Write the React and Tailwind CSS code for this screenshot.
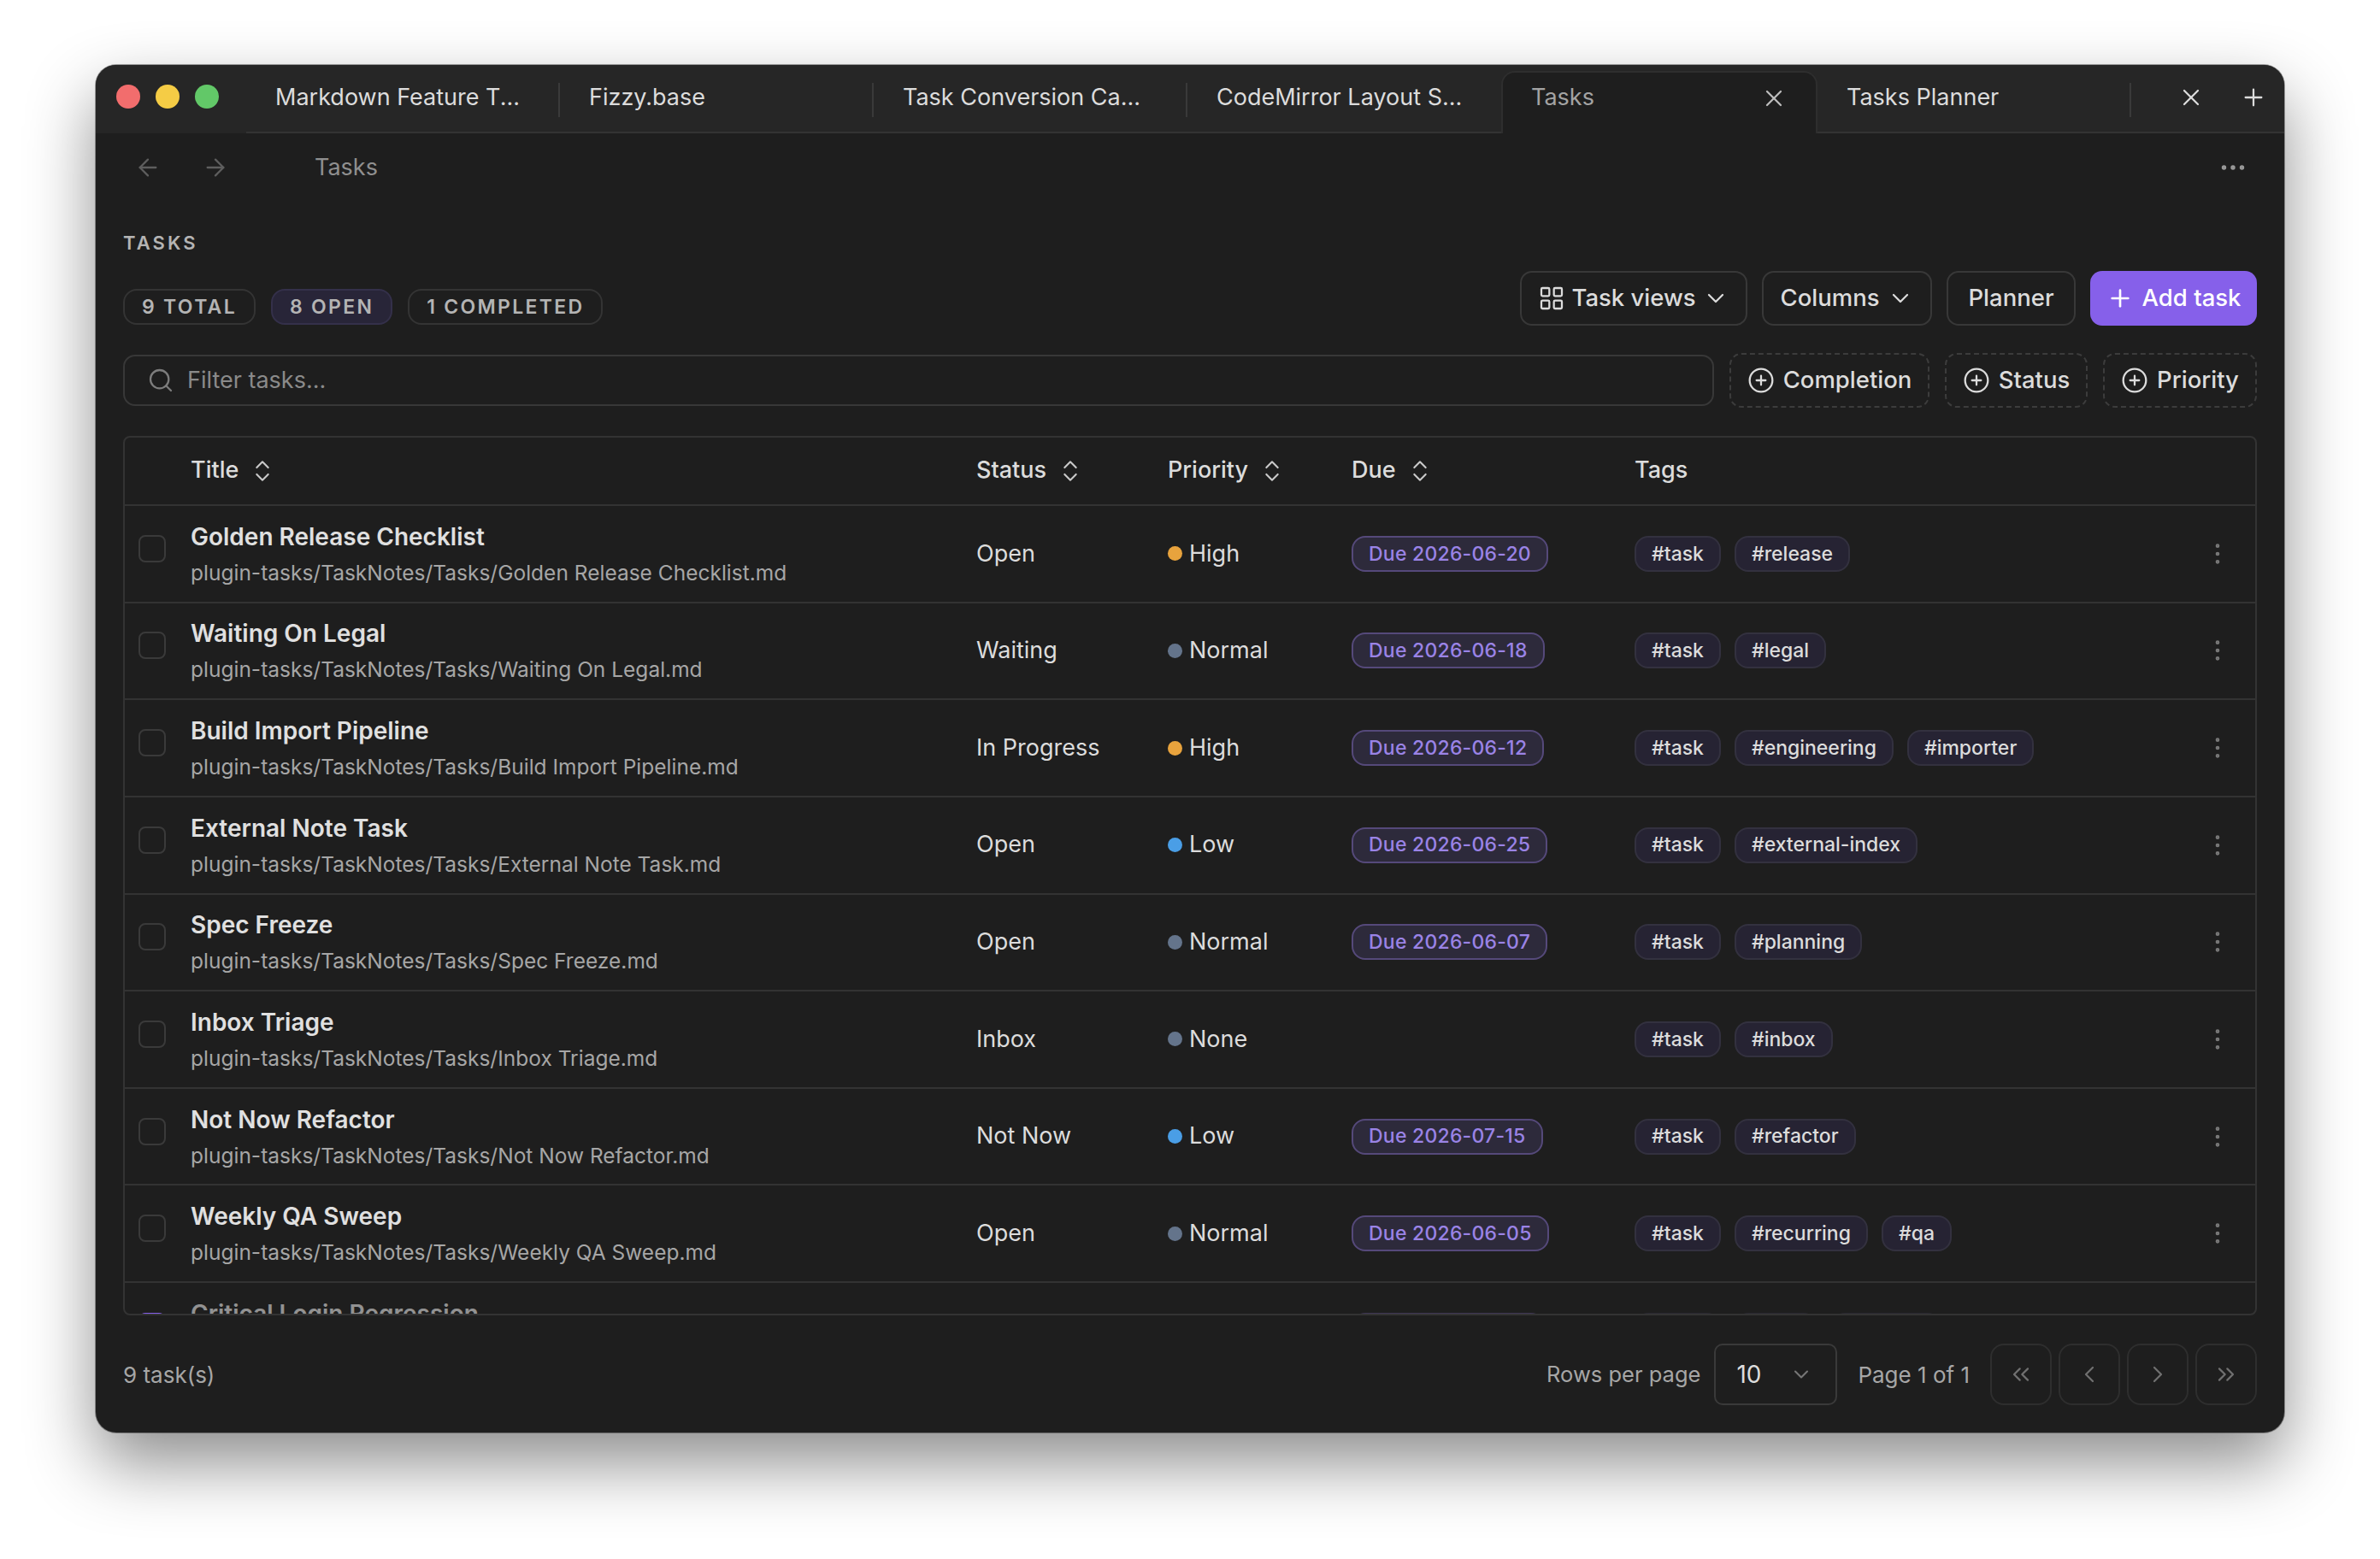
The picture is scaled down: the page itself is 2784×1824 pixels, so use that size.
import React from "react";
import {
  ArrowLeft,
  ArrowRight,
  Check,
  ChevronDown,
  ChevronLeft,
  ChevronRight,
  ChevronsLeft,
  ChevronsRight,
  ChevronsUpDown,
  CirclePlus,
  Ellipsis,
  EllipsisVertical,
  LayoutGrid,
  Plus,
  Search,
  X,
} from "lucide-react";

const tabs = [
  { title: "Markdown Feature T...", width: "w-[367px]", divider: true },
  { title: "Fizzy.base", width: "w-[367px]", divider: true },
  { title: "Task Conversion Ca...", width: "w-[367px]", divider: true },
  { title: "CodeMirror Layout S...", width: "w-[367px]", divider: false },
];

const dotColors = {
  High: "bg-[#e8a33d]",
  Normal: "bg-[#64748b]",
  None: "bg-[#64748b]",
  Low: "bg-[#4a9ee6]",
};

const rows = [
  { title: "Golden Release Checklist", status: "Open", priority: "High", due: "2026-06-20", tags: ["#task", "#release"] },
  { title: "Waiting On Legal", status: "Waiting", priority: "Normal", due: "2026-06-18", tags: ["#task", "#legal"] },
  { title: "Build Import Pipeline", status: "In Progress", priority: "High", due: "2026-06-12", tags: ["#task", "#engineering", "#importer"] },
  { title: "External Note Task", status: "Open", priority: "Low", due: "2026-06-25", tags: ["#task", "#external-index"] },
  { title: "Spec Freeze", status: "Open", priority: "Normal", due: "2026-06-07", tags: ["#task", "#planning"] },
  { title: "Inbox Triage", status: "Inbox", priority: "None", due: null, tags: ["#task", "#inbox"] },
  { title: "Not Now Refactor", status: "Not Now", priority: "Low", due: "2026-07-15", tags: ["#task", "#refactor"] },
  { title: "Weekly QA Sweep", status: "Open", priority: "Normal", due: "2026-06-05", tags: ["#task", "#recurring", "#qa"] },
  { title: "Critical Login Regression", status: "Done", priority: "High", due: "2026-06-01", tags: ["#task", "#bug", "#critical"], done: true },
];

const gridCols = "grid-cols-[77px_919px_224px_215px_331px_1fr_88px]";

function Tab({ title, width, divider }) {
  return (
    <div className={`${width} relative flex h-full items-center border-b-2 border-[#333333] pl-[34px] pb-[2px]`}>
      <span className="text-[27px] text-[#dcdcdc]">{title}</span>
      {divider && <span className="absolute right-0 top-[21px] h-[40px] w-[2px] bg-[#3a3a3a]" />}
    </div>
  );
}

function SortHeader({ label }) {
  return (
    <div className="flex items-center gap-[12px] pb-[1px] text-[27px] font-medium text-[#dcdcdc]">
      {label}
      <ChevronsUpDown size={32} strokeWidth={1.6} className="text-[#c8c8c8]" />
    </div>
  );
}

function OutlineButton({ className, children }) {
  return (
    <button className={`flex h-[64px] items-center justify-center rounded-[14px] border-2 border-[#383838] text-[27.5px] font-medium text-[#dcdcdc] ${className}`}>
      {children}
    </button>
  );
}

function FacetButton({ label, className }) {
  return (
    <button className={`flex h-[64px] items-center justify-center gap-[10px] rounded-[14px] border-2 border-dashed border-[#3c3c3c] text-[27.5px] font-medium text-[#dcdcdc] ${className}`}>
      <CirclePlus size={32} strokeWidth={1.7} />
      {label}
    </button>
  );
}

function Chip({ label, active }) {
  return (
    <span
      className={`flex h-[42px] items-center rounded-[16px] border-2 px-[20px] text-[23px] font-semibold tracking-[0.1em] text-[#b4b4b4] ${
        active ? "border-[#34304a] bg-[#282538]" : "border-[#343434]"
      }`}
    >
      {label}
    </span>
  );
}

function PagerButton({ children }) {
  return (
    <button className="flex h-[72px] w-[72px] items-center justify-center rounded-[16px] border-2 border-[#2e2e2e] text-[#707070]">
      {children}
    </button>
  );
}

function Row({ row }) {
  const dim = row.done ? "opacity-60" : "";
  return (
    <div className={`grid ${gridCols} h-[113.625px] items-center border-b-2 border-[#333333]`}>
      <div className="pl-[16px]">
        {row.done ? (
          <span className="mb-[9px] flex h-[32px] w-[32px] items-center justify-center rounded-[8px] bg-[#8660ea] text-white">
            <Check size={24} />
          </span>
        ) : (
          <span className="mb-[12px] block h-[32px] w-[32px] rounded-[8px] border-2 border-[#3a3a3a]" />
        )}
      </div>
      <div className={`pt-[2px] ${dim}`}>
        <div className="text-[28px] font-semibold leading-[40px] text-[#e0e0e0]">{row.title}</div>
        <div className="mt-[2px] text-[24.5px] leading-[40px] text-[#a6a6a6]">
          plugin-tasks/TaskNotes/Tasks/{row.title}.md
        </div>
      </div>
      <div className={`text-[27px] text-[#dcdcdc] ${dim}`}>{row.status}</div>
      <div className={`flex items-center gap-[8px] text-[27px] text-[#dcdcdc] ${dim}`}>
        <span className={`h-[17px] w-[17px] shrink-0 rounded-full ${dotColors[row.priority]}`} />
        {row.priority}
      </div>
      <div className={dim}>
        {row.due && (
          <span className="inline-flex h-[42px] items-center rounded-[16px] border-2 border-[#55497a] bg-[#2d2a3b] px-[18px] text-[23px] font-medium tracking-[0.01em] text-[#9a83e6]">
            Due {row.due}
          </span>
        )}
      </div>
      <div className={`flex gap-[16px] ${dim}`}>
        {row.tags.map((tag) => (
          <span
            key={tag}
            className="flex h-[42px] items-center rounded-[16px] border-2 border-[#33313f] bg-[#262333] px-[18px] text-[23px] font-medium text-[#dcdcdc]"
          >
            {tag}
          </span>
        ))}
      </div>
      <div className={`flex justify-center text-[#7a7a7a] ${dim}`}>
        <EllipsisVertical size={32} strokeWidth={1.5} />
      </div>
    </div>
  );
}

export default function App() {
  return (
    <div className="h-[1824px] overflow-hidden bg-white px-[112px] pt-[76px] font-['Inter',sans-serif]">
      <div className="flex h-[1600px] flex-col overflow-hidden rounded-[24px] bg-[#1e1e1e] shadow-[0_0_0_1px_rgba(0,0,0,0.35),0_36px_80px_rgba(0,0,0,0.45)]">
        {/* tab bar */}
        <div className="flex h-[80px] items-stretch bg-[#262626]">
          <div className="flex w-[176px] items-center gap-[18px] pb-[6px] pl-[24px]">
            <span className="h-[28px] w-[28px] rounded-full bg-[#f26d6d]" />
            <span className="h-[28px] w-[28px] rounded-full bg-[#f5cc45]" />
            <span className="h-[28px] w-[28px] rounded-full bg-[#62c868]" />
          </div>
          {tabs.map((tab) => (
            <Tab key={tab.title} {...tab} />
          ))}
          <div className="mt-[7px] flex w-[370px] items-center justify-between rounded-t-[16px] border-x-2 border-t-2 border-[#2e2e2e] bg-[#1e1e1e] pb-[12px] pl-[33px] pr-[33px]">
            <span className="text-[27px] text-[#a3a3a3]">Tasks</span>
            <X size={32} strokeWidth={1.7} className="text-[#bdbdbd]" />
          </div>
          <Tab title="Tasks Planner" width="w-[367px]" divider />
          <div className="flex flex-1 items-center justify-between border-b-2 border-[#333333] pb-[2px] pl-[54px] pr-[20px] text-[#dcdcdc]">
            <X size={32} strokeWidth={1.7} />
            <Plus size={32} strokeWidth={1.7} />
          </div>
        </div>

        {/* nav row */}
        <div className="flex h-[80px] items-center pl-[45px] pr-[42px]">
          <ArrowLeft size={32} strokeWidth={1.7} className="text-[#5e5e5e]" />
          <ArrowRight size={32} strokeWidth={1.7} className="ml-[47px] text-[#5e5e5e]" />
          <span className="ml-[100px] text-[27px] text-[#8f8f8f]">Tasks</span>
          <Ellipsis size={36} strokeWidth={1.6} className="ml-auto text-[#9a9a9a]" />
        </div>

        <div className="flex flex-1 flex-col px-[32px]">
          <div className="pt-[32px] text-[22px] font-semibold leading-[32px] tracking-[0.14em] text-[#b4b4b4]">TASKS</div>

          <div className="mt-[17px] flex items-end justify-between">
            <div className="mb-[1px] flex gap-[18px]">
              <Chip label="9 TOTAL" />
              <Chip label="8 OPEN" active />
              <Chip label="1 COMPLETED" />
            </div>
            <div className="flex gap-[17px]">
              <OutlineButton className="w-[266px] gap-[7px]">
                <LayoutGrid size={32} strokeWidth={1.7} />
                Task views
                <ChevronDown size={32} strokeWidth={1.7} />
              </OutlineButton>
              <OutlineButton className="w-[199px] gap-[8px]">
                Columns
                <ChevronDown size={32} strokeWidth={1.7} />
              </OutlineButton>
              <OutlineButton className="w-[151px]">Planner</OutlineButton>
              <button className="flex h-[64px] w-[195px] items-center justify-center gap-[10px] rounded-[14px] bg-[#8660ea] text-[27.5px] font-medium text-white">
                <Plus size={32} strokeWidth={2} />
                Add task
              </button>
            </div>
          </div>

          <div className="mt-[32px] flex items-center gap-[18px]">
            <div className="flex h-[60px] flex-1 items-center gap-[15px] rounded-[14px] border-2 border-[#383838] pl-[26px] text-[27px] text-[#8a8a8a]">
              <Search size={32} strokeWidth={1.7} className="text-[#7d7d7d]" />
              Filter tasks...
            </div>
            <FacetButton label="Completion" className="w-[234px]" />
            <FacetButton label="Status" className="w-[167px]" />
            <FacetButton label="Priority" className="w-[180px]" />
          </div>

          {/* table */}
          <div className="mt-[33px] h-[1029px] overflow-hidden rounded-[8px] border-2 border-[#333333]">
            <div className={`grid ${gridCols} h-[80px] items-center border-b-2 border-[#333333]`}>
              <div />
              <SortHeader label="Title" />
              <SortHeader label="Status" />
              <SortHeader label="Priority" />
              <SortHeader label="Due" />
              <div className="pb-[1px] text-[27px] font-medium text-[#dcdcdc]">Tags</div>
              <div />
            </div>
            {rows.map((row) => (
              <Row key={row.title} row={row} />
            ))}
          </div>

          {/* footer */}
          <div className="mt-[33px] flex items-center">
            <span className="text-[26px] text-[#a6a6a6]">9 task(s)</span>
            <span className="ml-auto text-[25.5px] text-[#a6a6a6]">Rows per page</span>
            <div className="ml-[16px] flex h-[72px] w-[144px] items-center justify-between rounded-[10px] border-2 border-[#3a3a3a] pl-[24px] pr-[26px] text-[28px] text-[#dcdcdc]">
              10
              <ChevronDown size={28} strokeWidth={1.8} className="text-[#777777]" />
            </div>
            <span className="ml-[24px] text-[26px] text-[#a6a6a6]">Page 1 of 1</span>
            <div className="ml-[24px] flex gap-[8px]">
              <PagerButton><ChevronsLeft size={32} strokeWidth={1.7} /></PagerButton>
              <PagerButton><ChevronLeft size={32} strokeWidth={1.7} /></PagerButton>
              <PagerButton><ChevronRight size={32} strokeWidth={1.7} /></PagerButton>
              <PagerButton><ChevronsRight size={32} strokeWidth={1.7} /></PagerButton>
            </div>
          </div>
        </div>
      </div>
    </div>
  );
}
